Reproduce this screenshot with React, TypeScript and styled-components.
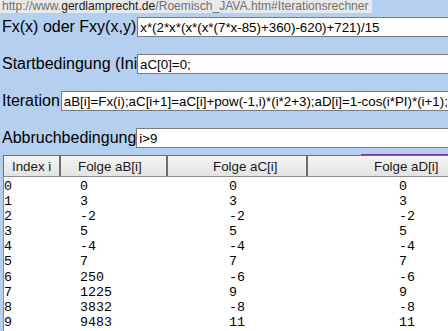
import React from "react";
import styled, { createGlobalStyle } from "styled-components";

const Global = createGlobalStyle`
  html, body { margin: 0; padding: 0; background: #b5cff0; overflow: hidden; }
`;

const Page = styled.div`
  width: 448px;
  height: 331px;
  overflow: hidden;
  background: #b5cff0;
  font-family: "Liberation Sans", Arial, sans-serif;
`;

const UrlBar = styled.div`
  display: flex;
  align-items: center;
  width: fit-content;
  height: 13px;
  padding: 0 3px 0 2px;
  background: #e9e9e9;
  color: #707070;
  font-size: 12.1px;
  line-height: 13px;
  white-space: nowrap;
`;

const Host = styled.span`
  color: #1c1c1c;
`;

const Form = styled.div`
  display: flex;
  flex-direction: column;
  gap: 17px;
  padding: 4px 0 0 2px;
`;

const Row = styled.div`
  display: flex;
  align-items: center;
  height: 20px;
  white-space: nowrap;
`;

const Label = styled.span<{ $clip?: number }>`
  flex: none;
  font-size: 16px;
  color: #000;
  ${(p) => (p.$clip ? `width: ${p.$clip}px; overflow: hidden;` : "")}
`;

const Field = styled.input<{ $gap?: number }>`
  flex: none;
  width: 430px;
  height: 20px;
  box-sizing: border-box;
  margin: 0 0 0 ${(p) => p.$gap ?? 0}px;
  padding: 0 2px;
  border: 1px solid #7a7a7a;
  background: #fff;
  color: #000;
  font: 13.33px "Liberation Sans", Arial, sans-serif;
  outline: none;
`;

const Table = styled.div`
  position: relative;
  margin: 7px 0 0 3px;
`;

const FocusLine = styled.div`
  position: absolute;
  top: -1px;
  left: 358px;
  right: 0;
  height: 1px;
  background: #7a3aa6;
`;

const Head = styled.div`
  display: grid;
  grid-template-columns: 56px 107px 140px 1fr;
  height: 22px;
  box-sizing: border-box;
  border-top: 1px solid #707070;
  border-bottom: 1px solid #8c8c8c;
  background: linear-gradient(#f5f5f5, #e3e3e3);
`;

const HeadCell = styled.div<{ $pad: number; $edge?: number }>`
  display: flex;
  align-items: center;
  border-left: ${(p) => p.$edge ?? 2}px solid #6e6e6e;
  padding-left: ${(p) => p.$pad}px;
  font-size: 13.33px;
  color: #1a1a1a;
  white-space: nowrap;
`;

const Body = styled.div`
  height: 160px;
  padding-top: 2px;
  background: #fff;
  border-left: 1px solid #8c8c8c;
  font: 13.33px "Liberation Mono", "Courier New", monospace;
  color: #000;
`;

const DataRow = styled.div`
  display: grid;
  grid-template-columns: 76px 149px 170px 1fr;
  line-height: 15.1px;
  white-space: pre;
`;

const aB = [0, 3, -2, 5, -4, 7, 250, 1225, 3832, 9483];
const aC = [0, 3, -2, 5, -4, 7, -6, 9, -8, 11];

export default function App() {
  return (
    <Page>
      <Global />
      <UrlBar>
        http://www.<Host>gerdlamprecht.de</Host>/Roemisch_JAVA.htm#Iterationsrechner
      </UrlBar>
      <Form>
        <Row>
          <Label>Fx(x) oder Fxy(x,y)</Label>
          <Field $gap={1} readOnly value="x*(2*x*(x*(x*(7*x-85)+360)-620)+721)/15" />
        </Row>
        <Row>
          <Label $clip={135}>Startbedingung (Initialisierung)</Label>
          <Field readOnly value="aC[0]=0;" />
        </Row>
        <Row>
          <Label>Iteration</Label>
          <Field
            $gap={1}
            readOnly
            value="aB[i]=Fx(i);aC[i+1]=aC[i]+pow(-1,i)*(i*2+3);aD[i]=1-cos(i*PI)*(i+1);"
          />
        </Row>
        <Row>
          <Label>Abbruchbedingung</Label>
          <Field readOnly value="i>9" />
        </Row>
      </Form>
      <Table>
        <FocusLine />
        <Head>
          <HeadCell $pad={8} $edge={1}>Index i</HeadCell>
          <HeadCell $pad={17}>Folge aB[i]</HeadCell>
          <HeadCell $pad={45}>Folge aC[i]</HeadCell>
          <HeadCell $pad={66}>Folge aD[i]</HeadCell>
        </Head>
        <Body>
          {aB.map((b, i) => (
            <DataRow key={i}>
              <span>{i}</span>
              <span>{b}</span>
              <span>{aC[i]}</span>
              <span>{aC[i]}</span>
            </DataRow>
          ))}
        </Body>
      </Table>
    </Page>
  );
}
